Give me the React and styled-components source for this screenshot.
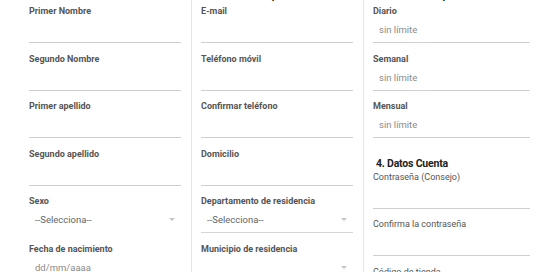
import React from "react";
import styled, { createGlobalStyle } from "styled-components";

const GlobalStyle = createGlobalStyle`
    html, body {
        margin: 0;
        padding: 0;
        background: #ffffff;
        overflow: hidden;
    }
    body {
        font-family: Roboto, "Liberation Sans", Arial, sans-serif;
    }
`;

const columns = [
    {
        title: "1. Datos Personales",
        fields: [
            { label: "Primer Nombre" },
            { label: "Segundo Nombre" },
            { label: "Primer apellido" },
            { label: "Segundo apellido" },
            { label: "Sexo", select: "--Selecciona--", line: false },
            { label: "Fecha de nacimiento", value: "dd/mm/aaaa" },
        ],
    },
    {
        title: "2. Datos de Empresa",
        fields: [
            { label: "E-mail" },
            { label: "Teléfono móvil" },
            { label: "Confirmar teléfono" },
            { label: "Domicilio" },
            { label: "Departamento de residencia", select: "--Selecciona--" },
            { label: "Municipio de residencia", select: "" },
        ],
    },
    {
        title: "3. Límites de operación",
        fields: [
            { label: "Diario", value: "sin límite" },
            { label: "Semanal", value: "sin límite" },
            { label: "Mensual", value: "sin límite" },
        ],
        extra: {
            title: "4. Datos Cuenta",
            fields: [
                { label: "Contraseña (Consejo)", plain: true },
                { label: "Confirma la contraseña", plain: true },
                { label: "Código de tienda", plain: true },
            ],
        },
    },
];

function Field({ label, value, select, plain, line = true }) {
    return (
        <FieldBox>
            <Label $plain={plain}>{label}</Label>
            {select !== undefined ? (
                <Select $line={line}>
                    <span>{select}</span>
                    <Arrow />
                </Select>
            ) : (
                <Input>{value}</Input>
            )}
        </FieldBox>
    );
}

export default function App() {
    return (
        <>
            <GlobalStyle />
            <Page>
                {columns.map((col, i) => (
                    <Column key={col.title} $first={i === 0}>
                        <Heading>{col.title}</Heading>
                        {col.fields.map((f) => (
                            <Field key={f.label} {...f} />
                        ))}
                        {col.extra && (
                            <>
                                <Heading $spaced>{col.extra.title}</Heading>
                                {col.extra.fields.map((f) => (
                                    <Field key={f.label} {...f} />
                                ))}
                            </>
                        )}
                    </Column>
                ))}
            </Page>
        </>
    );
}

// the form is scrolled a little: the section titles sit just above the top edge
const Page = styled.div`
    display: grid;
    grid-template-columns: 191px 172px 177px;
    margin-top: -11px;
    height: 283px;
    overflow: hidden;
`;

const Column = styled.div`
    padding-left: ${(p) => (p.$first ? "29px" : "9px")};
    padding-right: 10px;
    border-left: ${(p) => (p.$first ? "none" : "1px solid #e6e6e6")};
    display: flex;
    flex-direction: column;
`;

const Heading = styled.h4`
    margin: ${(p) => (p.$spaced ? "9px 0 0 3px" : "0 0 2px 3px")};
    height: 14px;
    line-height: 14px;
    font-family: Roboto, "Liberation Sans", sans-serif;
    font-weight: 700;
    font-size: 10.5px;
    letter-spacing: -0.2px;
    color: #222;
    white-space: nowrap;
`;

const FieldBox = styled.div`
    display: flex;
    flex-direction: column;
    margin-bottom: 9.5px;
    flex-shrink: 0;
`;

const Label = styled.label`
    height: 12px;
    line-height: 12px;
    font-size: 9px;
    font-weight: ${(p) => (p.$plain ? 400 : 700)};
    color: #555;
    white-space: nowrap;
`;

const Input = styled.div`
    height: 25px;
    border-bottom: 1px solid #cfcfcf;
    padding-left: 6px;
    display: flex;
    align-items: center;
    font-size: 9.5px;
    color: #8a8a8a;
`;

const Select = styled.div`
    height: 25px;
    border-bottom: 1px solid ${(p) => (p.$line ? "#d6d6d6" : "transparent")};
    padding: 0 5px 0 6px;
    display: flex;
    align-items: center;
    justify-content: space-between;
    font-size: 9.5px;
    color: #666;
`;

const Arrow = styled.span`
    width: 0;
    height: 0;
    border-left: 3px solid transparent;
    border-right: 3px solid transparent;
    border-top: 3px solid #c4c4c4;
    margin-right: 1px;
`;
